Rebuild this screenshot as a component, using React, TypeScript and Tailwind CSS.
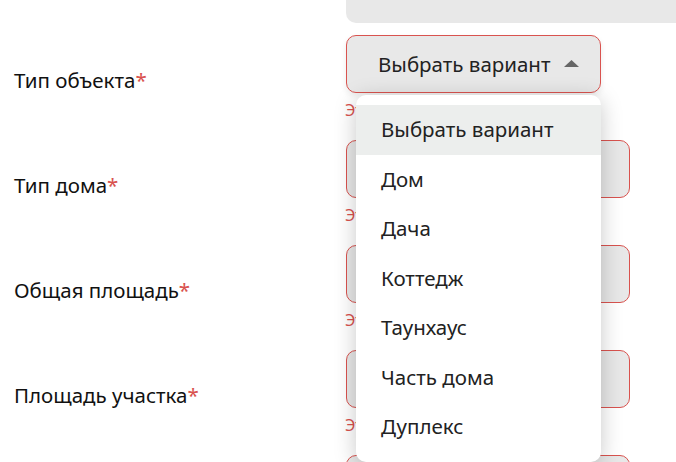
import React from "react";

function Label({ text, star = true }: { text: string; star?: boolean }) {
  return (
    <div className="w-[346px] shrink-0 pl-[14px] pt-[31px] text-[20.5px] leading-[28px] text-[#111]">
      {text}
      {star && <span className="text-[#d9534f]">*</span>}
    </div>
  );
}

function ErrorText() {
  return (
    <div className="pt-[6px] -ml-[1px] text-[16px] leading-[22px] text-[#d9534f] whitespace-nowrap">
      Это поле обязательное
    </div>
  );
}

const options = [
  "Выбрать вариант",
  "Дом",
  "Дача",
  "Коттедж",
  "Таунхаус",
  "Часть дома",
  "Дуплекс",
];

export default function App() {
  return (
    <div className="relative w-[676px] h-[462px] overflow-hidden bg-white font-['Noto_Sans',sans-serif]">
      <div className="-mt-[35px]">
        {/* Кадастровый номер */}
        <div className="flex h-[70px]">
          <div className="w-[346px] shrink-0 pl-[14px] pt-[8px] text-[20.5px] leading-[28px] text-[#111]">
            Кадастровый номер объекта
          </div>
          <div className="flex-1">
            <div className="h-[58px] w-[360px] rounded-[10px] bg-[#e8e8e8]" />
          </div>
        </div>

        {/* Тип объекта */}
        <div className="flex h-[105px]">
          <Label text="Тип объекта" />
          <div className="relative z-10">
            <div className="flex h-[58px] w-[255px] items-center rounded-[10px] border border-[#d9534f] bg-[#e8e8e8] pl-[31px] pr-[21px] text-[20.5px] text-[#222] shadow-[0_3px_6px_rgba(0,0,0,0.08)]">
              <span className="flex-1">Выбрать вариант</span>
              <svg width="15" height="7" viewBox="0 0 15 7" className="mb-[1px]">
                <path d="M0 7 L7.5 0 L15 7 Z" fill="#666666" />
              </svg>
            </div>
            <ErrorText />
            <div className="absolute left-[10px] top-[60px] w-[245px] rounded-[10px] bg-white py-[10px] shadow-[0_4px_22px_rgba(0,0,0,0.22)]">
              {options.map((o, i) => (
                <div
                  key={o}
                  className={
                    "flex h-[49.5px] items-center pl-[25px] text-[20.5px] text-[#222] " +
                    (i === 0 ? "bg-[#eceeed]" : "")
                  }
                >
                  {o}
                </div>
              ))}
            </div>
          </div>
        </div>

        {/* Тип дома */}
        <div className="flex h-[105px]">
          <Label text="Тип дома" />
          <div>
            <div className="h-[58px] w-[284px] rounded-[10px] border border-[#d9534f] bg-[#e8e8e8]" />
            <ErrorText />
          </div>
        </div>

        {/* Общая площадь */}
        <div className="flex h-[105px]">
          <Label text="Общая площадь" />
          <div>
            <div className="h-[58px] w-[284px] rounded-[10px] border border-[#d9534f] bg-[#e8e8e8]" />
            <ErrorText />
          </div>
        </div>

        {/* Площадь участка */}
        <div className="flex h-[105px]">
          <Label text="Площадь участка" />
          <div>
            <div className="h-[58px] w-[284px] rounded-[10px] border border-[#d9534f] bg-[#e8e8e8]" />
            <ErrorText />
          </div>
        </div>

        <div className="flex h-[105px]">
          <div className="w-[346px] shrink-0" />
          <div>
            <div className="h-[58px] w-[284px] rounded-[10px] border border-[#d9534f] bg-[#e8e8e8]" />
          </div>
        </div>
      </div>
    </div>
  );
}
